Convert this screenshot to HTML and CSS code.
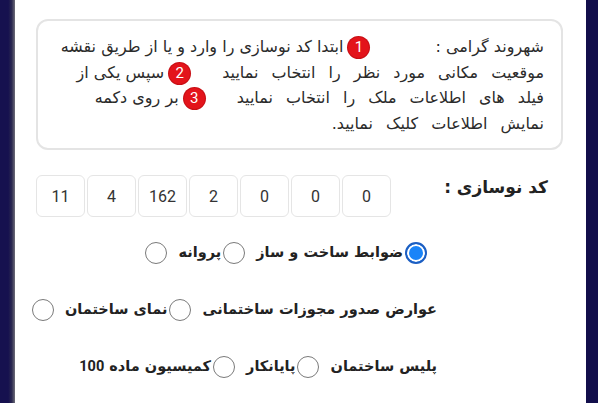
FILE: index.html
```html
<!DOCTYPE html>
<html lang="fa" dir="rtl">
<head>
    <meta charset="UTF-8">
    <meta name="viewport" content="width=device-width, initial-scale=1.0">
    <title>استعلام کد نوسازی</title>
    <link rel="stylesheet" href="styles.css">
</head>
<body>
    <div class="page">
        <div class="edge edge-left"></div>

        <main class="content">
            <!-- Help box -->
            <div class="notice">
                <p>
                    <span class="lead">شهروند گرامی :</span><span class="step">1</span>ابتدا کد نوسازی را وارد و یا از طریق نقشه<br>
                    <span class="wide">موقعیت مکانی مورد نظر را انتخاب نمایید</span><span class="step">2</span>سپس یکی از<br>
                    <span class="wide">فیلد های اطلاعات ملک را انتخاب نمایید</span><span class="step">3</span>بر روی دکمه<br>
                    <span class="wide">نمایش اطلاعات کلیک نمایید.</span>
                </p>
            </div>

            <!-- Renovation code -->
            <div class="form-row code-row">
                <div class="form-label">کد نوسازی :</div>
                <div class="form-field">
                    <div class="code-boxes">
                        <span class="code-box">11</span>
                        <span class="code-box">4</span>
                        <span class="code-box">162</span>
                        <span class="code-box">2</span>
                        <span class="code-box">0</span>
                        <span class="code-box">0</span>
                        <span class="code-box">0</span>
                    </div>
                </div>
            </div>

            <!-- Info layers -->
            <div class="form-row">
                <div class="form-label"></div>
                <div class="form-field layers">
                    <label class="layer"><input type="radio" name="layer" checked>ضوابط ساخت و ساز</label>
                    <label class="layer"><input type="radio" name="layer">پروانه</label>
                    <label class="layer"><input type="radio" name="layer"><br>عوارض صدور مجوزات ساختمانی</label>
                    <label class="layer"><input type="radio" name="layer">نمای ساختمان</label>
                    <label class="layer"><input type="radio" name="layer"><br>پلیس ساختمان</label>
                    <label class="layer"><input type="radio" name="layer">پایانکار</label>
                    <label class="layer"><input type="radio" name="layer">کمیسیون ماده <span class="num">100</span></label>
                </div>
            </div>
        </main>

        <div class="edge edge-right"></div>
    </div>
</body>
</html>
```

FILE: styles.css
```css
body {
    font-family: "DejaVu Sans", sans-serif;
    margin: 0;
    padding: 0;
    background: #fff;
    color: #333;
    overflow: hidden;
}

.page {
    display: flex;
    direction: ltr;
    min-height: 403px;
}

.edge {
    flex: none;
}

.edge-left {
    width: 15px;
    background: linear-gradient(to right, #16114f 0%, #16114f 55%, #2b2950 78%, #6e6d78 100%);
}

.edge-right {
    width: 12px;
    background: #120e4b;
}

.content {
    flex: 1;
    min-width: 0;
    direction: rtl;
    padding: 19px 23px 0 21px;
}

/* help box */

.notice {
    height: 131px;
    box-sizing: border-box;
    border: 2px solid #e4e4e4;
    border-radius: 12px;
    padding: 13px 17px 0 16px;
}

.notice p {
    margin: 0;
    font-size: 16px;
    line-height: 25.5px;
    color: #2b2b2b;
    white-space: nowrap;
}

.notice .lead {
    margin-left: 34px;
}

.notice .wide {
    word-spacing: 8px;
}

.step {
    display: inline-block;
    width: 21px;
    height: 21px;
    margin: 0 32px 0 5px;
    border-radius: 50%;
    background: #e3141b;
    box-shadow: 0 0 0 1px #c80f15;
    color: #fff;
    font-family: Roboto, sans-serif;
    font-size: 15px;
    line-height: 21px;
    text-align: center;
    vertical-align: middle;
}

/* form rows */

.form-row {
    display: flex;
}

.code-row {
    margin-top: 25px;
}

.form-label {
    flex: none;
    width: 126px;
    box-sizing: border-box;
    padding-right: 15px;
    font-size: 17px;
    font-weight: bold;
    line-height: 24px;
    white-space: nowrap;
    color: #222;
}

.form-field {
    flex: 1;
    min-width: 0;
}

.code-boxes {
    direction: ltr;
    display: flex;
    gap: 2px;
}

.code-box {
    width: 49px;
    height: 42px;
    box-sizing: border-box;
    border: 1px solid #e5e5e5;
    border-radius: 6px;
    display: flex;
    align-items: center;
    justify-content: center;
    font-family: Roboto, sans-serif;
    font-size: 16px;
    color: #333;
}

/* radio list */

.layers {
    margin-top: 7px;
    font-size: 14.5px;
    font-weight: bold;
    line-height: 57px;
    white-space: nowrap;
    color: #222;
}

.layers .num {
    font-family: Roboto, sans-serif;
}

.layer input[type="radio"] {
    appearance: none;
    width: 22px;
    height: 22px;
    box-sizing: border-box;
    margin: 0 6px 0 2px;
    border: 1.5px solid #7a7a7a;
    border-radius: 50%;
    background: #fff;
    vertical-align: middle;
}

.layer:first-child input[type="radio"] {
    margin-right: 10px;
}

.layer input[type="radio"]:checked {
    border: 2px solid #1c5ec2;
    background: #1a84f8;
    box-shadow: inset 0 0 0 2px #fff;
}
```
